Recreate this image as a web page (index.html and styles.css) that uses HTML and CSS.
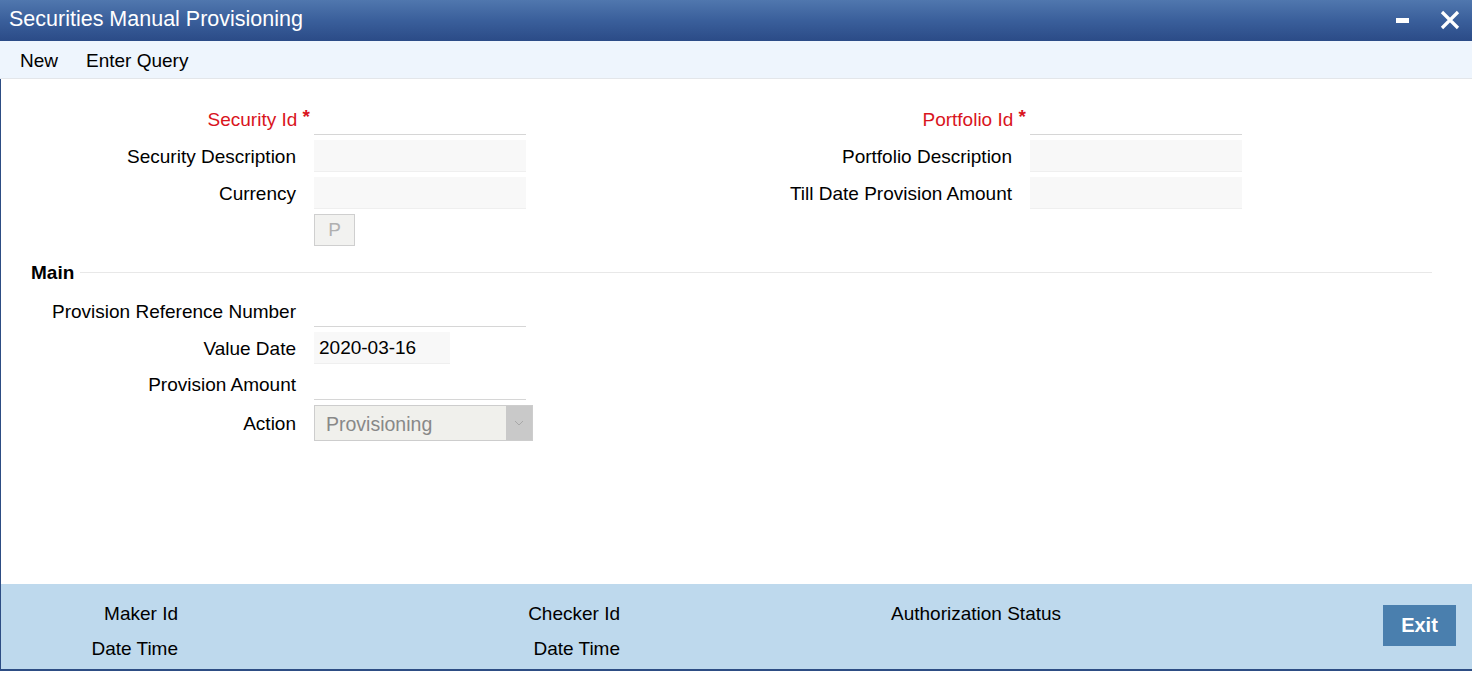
FILE: index.html
```html
<!DOCTYPE html>
<html>
<head>
<meta charset="utf-8">
<link rel="stylesheet" href="styles.css">
</head>
<body>
<div class="window">
  <div class="titlebar">
    <div class="title">Securities Manual Provisioning</div>
    <div class="win-controls">
      <svg class="ic-min" width="14" height="6" viewBox="0 0 14 6"><rect x="0" y="0" width="13" height="5" fill="#fff"/></svg>
      <svg class="ic-close" width="20" height="20" viewBox="0 0 20 20"><path d="M2 2 L18 18 M18 2 L2 18" stroke="#fff" stroke-width="3.2" fill="none"/></svg>
    </div>
  </div>
  <div class="toolbar">
    <span class="tb-item">New</span>
    <span class="tb-item">Enter Query</span>
  </div>
  <div class="content">
    <div class="form-top">
      <div class="col">
        <div class="row"><label class="lbl req">Security Id <span class="star">*</span></label><div class="inp line"></div></div>
        <div class="row"><label class="lbl">Security Description</label><div class="inp fill"></div></div>
        <div class="row"><label class="lbl">Currency</label><div class="inp fill"></div></div>
        <div class="row"><span class="lbl"></span><button class="pbtn">P</button></div>
      </div>
      <div class="col right">
        <div class="row"><label class="lbl req">Portfolio Id <span class="star">*</span></label><div class="inp line"></div></div>
        <div class="row"><label class="lbl">Portfolio Description</label><div class="inp fill"></div></div>
        <div class="row"><label class="lbl">Till Date Provision Amount</label><div class="inp fill"></div></div>
      </div>
    </div>
    <div class="section-head"><span class="section-title">Main</span><span class="section-line"></span></div>
    <div class="col main">
      <div class="row"><label class="lbl">Provision Reference Number</label><div class="inp line"></div></div>
      <div class="row"><label class="lbl">Value Date</label><div class="inp fill date">2020-03-16</div></div>
      <div class="row"><label class="lbl">Provision Amount</label><div class="inp line"></div></div>
      <div class="row tall"><label class="lbl">Action</label>
        <div class="select"><span class="sel-text">Provisioning</span><span class="sel-arrow"><svg width="10" height="6" viewBox="0 0 10 6"><path d="M1 1 L5 5 L9 1" stroke="#a8a8a8" stroke-width="1" fill="none"/></svg></span></div>
      </div>
    </div>
  </div>
  <div class="footer">
    <div class="audit">
      <span class="flbl">Maker Id</span><span></span><span class="flbl">Checker Id</span>
      <span class="flbl">Date Time</span><span></span><span class="flbl">Date Time</span>
    </div>
    <div class="auth">Authorization Status</div>
    <button class="exit">Exit</button>
  </div>
</div>
</body>
</html>
```
FILE: styles.css
```css
html, body {
  margin: 0;
  padding: 0;
  background: #fff;
}
body {
  font-family: "Liberation Sans", Arial, sans-serif;
  color: #000;
  font-size: 19px;
}
.window {
  width: 1472px;
  height: 671px;
  display: flex;
  flex-direction: column;
  background: #fff;
}
.titlebar {
  height: 41px;
  flex: none;
  display: flex;
  align-items: center;
  justify-content: space-between;
  background: linear-gradient(to bottom, #5077ae 0%, #3a5f9b 50%, #2b4b87 100%);
  padding: 0 0 0 9px;
  box-sizing: border-box;
}
.title {
  color: #fff;
  font-size: 21.5px;
  margin-top: -2px;
}
.win-controls {
  display: flex;
  align-items: center;
  margin-right: 12px;
  margin-top: -2px;
}
.ic-min {
  margin-right: 30px;
  margin-top: 3px;
}
.toolbar {
  height: 37px;
  flex: none;
  background: #eef5fd;
  border-bottom: 1px solid #e3e6ea;
  display: flex;
  align-items: center;
  padding-left: 20px;
  box-sizing: content-box;
}
.tb-item {
  font-size: 19px;
  margin-right: 28px;
  margin-top: 3px;
}
.content {
  flex: 1;
  border-left: 1px solid #2d4d84;
  padding-top: 24px;
}
.form-top {
  display: flex;
}
.col {
  display: flex;
  flex-direction: column;
  gap: 5px;
}
.row {
  display: flex;
  align-items: center;
  height: 32px;
}
.row.tall {
  height: 36px;
}
.lbl {
  width: 295px;
  text-align: right;
  padding-right: 18px;
  padding-top: 2px;
  white-space: nowrap;
  font-size: 19px;
}
.col.right .lbl {
  width: 486px;
}
.req {
  color: #d9141d;
}
.star {
  font-size: 19px;
  font-weight: bold;
  position: relative;
  top: -3px;
  margin-right: -14px;
}
.inp {
  width: 212px;
  height: 32px;
  box-sizing: border-box;
}
.inp.line {
  border-bottom: 1px solid #d6d6d6;
}
.inp.fill {
  background: #f8f8f8;
  border-bottom: 1px solid #efefef;
}
.inp.date {
  width: 136px;
  padding-left: 5px;
  line-height: 31px;
}
.pbtn {
  width: 41px;
  height: 32px;
  background: #f2f2f0;
  border: 1px solid #cfcfcf;
  color: #b0b0b0;
  font-family: "Liberation Sans", Arial, sans-serif;
  font-size: 19px;
  padding: 0;
}
.section-head {
  display: flex;
  align-items: center;
  margin: 17px 0 0 30px;
  height: 20px;
}
.section-title {
  font-weight: bold;
  font-size: 19px;
}
.section-line {
  display: block;
  width: 1352px;
  height: 1px;
  background: #e8e8e8;
  margin-left: 6px;
  margin-top: -2px;
}
.col.main {
  margin-top: 12px;
  gap: 4.5px;
}
.select {
  width: 219px;
  height: 36px;
  box-sizing: border-box;
  border: 1px solid #cdcdcd;
  background: #f0f0ec;
  display: flex;
  align-items: center;
}
.sel-text {
  flex: 1;
  padding-left: 11px;
  padding-top: 3px;
  color: #888;
  font-size: 19.5px;
}
.sel-arrow {
  width: 26px;
  height: 100%;
  background: #c9c9c9;
  display: flex;
  align-items: center;
  justify-content: center;
}
.footer {
  height: 85px;
  flex: none;
  margin-top: auto;
  background: #bed9ed;
  border-bottom: 2px solid #2d4d84;
  border-left: 1px solid #2d4d84;
  display: flex;
  align-items: flex-start;
  box-sizing: content-box;
}
.audit {
  display: grid;
  grid-template-columns: 177px 264px 178px;
  grid-auto-rows: 35px;
  padding-top: 12px;
}
.flbl {
  text-align: right;
  font-size: 19px;
  line-height: 35px;
}
.auth {
  margin-left: 271px;
  padding-top: 12px;
  line-height: 35px;
  font-size: 19px;
}
.exit {
  margin-left: auto;
  margin-right: 16px;
  margin-top: 21px;
  width: 73px;
  height: 41px;
  border: none;
  background: #4a7fae;
  color: #fff;
  font-family: "Liberation Sans", Arial, sans-serif;
  font-weight: bold;
  font-size: 20px;
  padding: 0;
}
```
